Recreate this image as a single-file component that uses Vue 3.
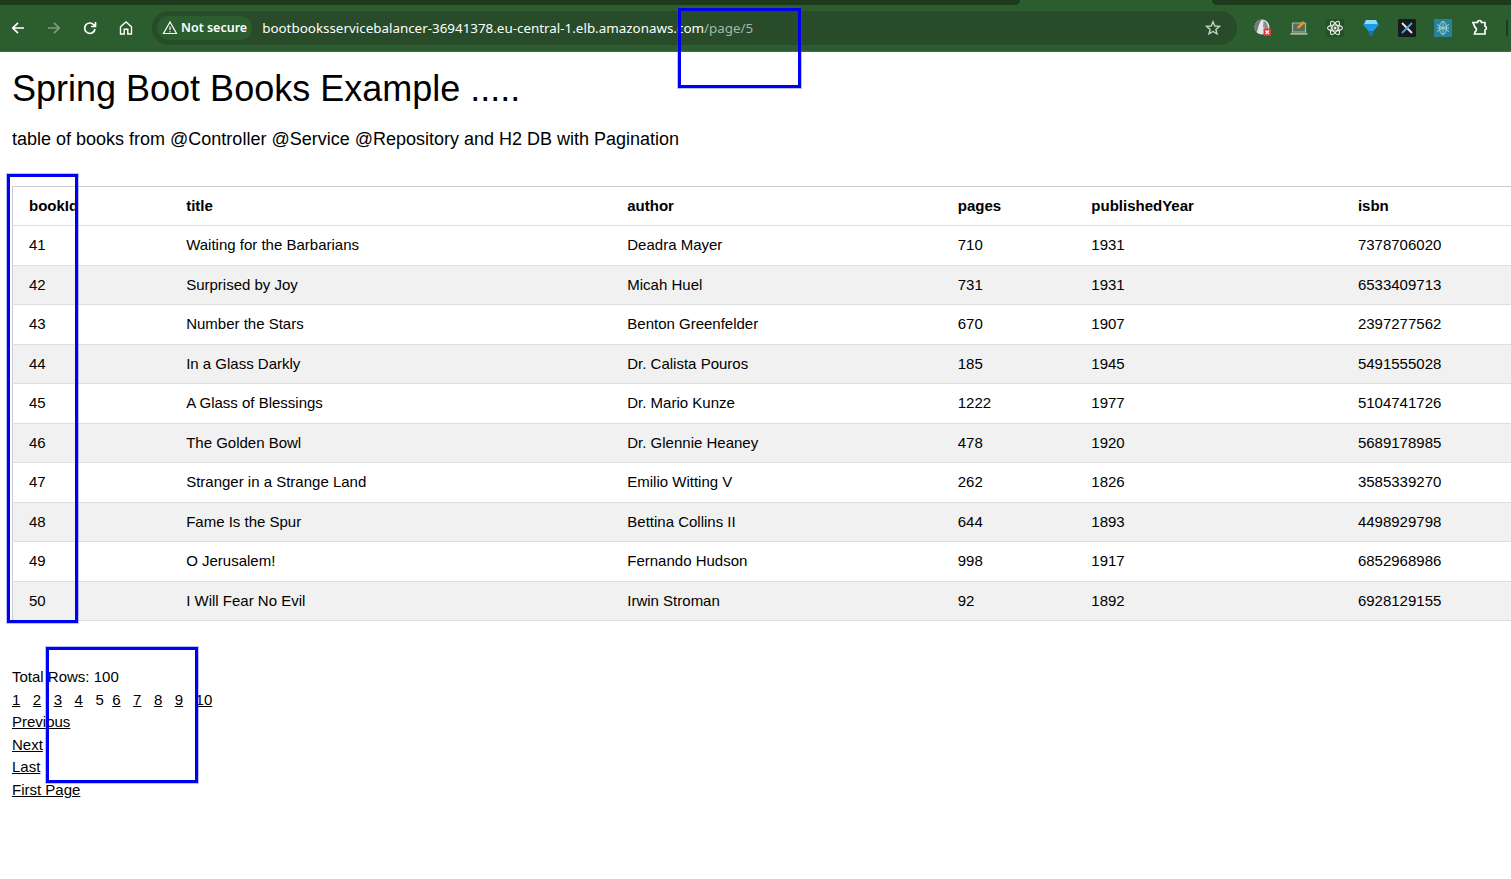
<template>
  <div class="page">
    <header class="browser">
      <div class="tabstrip">
        <div class="tab-dark first"></div>
        <div class="tab-gap"></div>
        <div class="tab-dark second"></div>
      </div>
      <div class="toolbar">
        <div class="nav">
          <button class="nav-btn">
            <svg viewBox="0 0 16 16" class="nav-icon"><path d="M14 8H3M8 2.800 2.800 8 8 13.200" /></svg>
          </button>
          <button class="nav-btn off">
            <svg viewBox="0 0 16 16" class="nav-icon"><path d="M2 8h11M8 2.800 13.200 8 8 13.200" /></svg>
          </button>
          <button class="nav-btn">
            <svg viewBox="0 0 16 16" class="nav-icon"><path d="M13 9a5.200 5.200 0 1 1-1.300-4.300L13.500 6.500M13.500 2v4.500H9" /></svg>
          </button>
          <button class="nav-btn">
            <svg viewBox="0 0 16 16" class="nav-icon thin"><path d="M2.500 14V6.800L8 2l5.500 4.800V14h-3.700V9.200H6.200V14z" /></svg>
          </button>
        </div>
        <div class="omnibox">
          <div class="chip">
            <svg viewBox="0 0 16 16" class="warn"><path d="M8 2 1.500 13.500h13zM8 6.500v3.600M8 11.200v1" /></svg>
            <span>Not secure</span>
          </div>
          <div class="url">bootbooksservicebalancer-36941378.eu-central-1.elb.amazonaws.com<span class="path">/page/5</span></div>
          <svg viewBox="0 0 16 16" class="star"><path d="M8 1.800 9.800 6l4.600.4-3.500 3 1.100 4.500L8 11.500l-4 2.400 1.100-4.500-3.500-3L6.200 6z" /></svg>
        </div>
        <div class="extensions">
          <svg viewBox="0 0 18 18" class="ext">
            <circle cx="8" cy="8" r="7.500" fill="#e6e6e6" />
            <path d="M8 .5a7.500 7.500 0 0 0-5 13c1-4 1.500-9 5-13z" fill="#77797a" />
            <path d="M9.500 1.500 9 8c2 1 3 3 3 5l2-2.500C14.500 7 13 3 9.500 1.500z" fill="#8d8f90" />
            <rect x="9.500" y="9.500" width="7.500" height="7.500" fill="#d93a3a" />
            <path d="m11.500 11.500 3.500 3.500m0-3.500L11.500 15" stroke="#fff" stroke-width="1.300" />
          </svg>
          <svg viewBox="0 0 18 18" class="ext">
            <path d="M2.500 4h13v9h-13z" fill="#55705a" stroke="#aeb6aa" stroke-width="1.200" />
            <path d="M.5 14.800h17" stroke="#aeb6aa" stroke-width="1.800" />
            <path d="m7 9.500.5-2.300L12.800 2l1.900 1.900L9.400 9.200z" fill="#f0921e" />
          </svg>
          <svg viewBox="0 0 18 18" class="ext">
            <rect width="18" height="18" fill="#25512a" />
            <g fill="none" stroke="#e4ece2" stroke-width="1.100">
              <ellipse cx="9" cy="9" rx="7.500" ry="3" />
              <ellipse cx="9" cy="9" rx="7.500" ry="3" transform="rotate(60 9 9)" />
              <ellipse cx="9" cy="9" rx="7.500" ry="3" transform="rotate(120 9 9)" />
            </g>
            <circle cx="9" cy="9" r="1.500" fill="#e4ece2" />
          </svg>
          <svg viewBox="0 0 18 18" class="ext">
            <path d="M4 1h10l3 4.500-5.500 6.500L10 17H8l-1.500-5L1 5.500z" fill="#1e9be6" />
            <path d="M4 1h10l1.500 4h-13z" fill="#8fdcf8" />
            <path d="M7 12h4l-1 5H8z" fill="#0d6ea8" />
          </svg>
          <svg viewBox="0 0 18 18" class="ext">
            <rect width="18" height="18" rx="1.500" fill="#17191c" />
            <path d="m4 4 10 10" stroke="#e8eef2" stroke-width="1.800" />
            <path d="M14 4 4 14" stroke="#4aa3e8" stroke-width="1.800" />
          </svg>
          <svg viewBox="0 0 18 18" class="ext">
            <rect width="18" height="18" fill="#2a8298" />
            <g fill="none" stroke="#9fcdd6" stroke-width="1">
              <ellipse cx="9" cy="9" rx="3.500" ry="6.500" />
              <path d="M3 5.500 15 12.500M15 5.500 3 12.500M9 2v14M3 9h12" />
            </g>
          </svg>
          <svg viewBox="0 0 18 18" class="ext puzzle"><path d="M2 3.500h4.500a2 2 0 0 1 4 0H14v3.700a2 2 0 0 1 0 3.800V15H3.500l.7-2.500a2.200 2.200 0 0 0 0-4L2 3.500z" /></svg>
        </div>
        <div class="divider"></div>
      </div>
    </header>

    <main class="content">
      <h1 class="title">Spring Boot Books Example .....</h1>
      <p class="lead">table of books from @Controller @Service @Repository and H2 DB with Pagination</p>

      <table class="books">
        <colgroup>
          <col v-for="w in colWidths" :key="w" :style="{ width: w + 'px' }" />
        </colgroup>
        <thead>
          <tr>
            <th v-for="c in columns" :key="c">{{ c }}</th>
          </tr>
        </thead>
        <tbody>
          <tr v-for="b in books" :key="b.bookId">
            <td v-for="c in columns" :key="c">{{ b[c] }}</td>
          </tr>
        </tbody>
      </table>

      <div class="pager">
        <div>Total Rows: 100</div>
        <div class="pages">
          <template v-for="n in 10" :key="n">
            <span v-if="n === 5" class="current">{{ n }}</span>
            <a v-else href="#" class="num">{{ n }}</a>
          </template>
        </div>
        <div><a href="#">Previous</a></div>
        <div><a href="#">Next</a></div>
        <div><a href="#">Last</a></div>
        <div><a href="#">First Page</a></div>
      </div>
    </main>

    <!-- annotation boxes drawn over the screenshot -->
    <div class="mark mark-url"></div>
    <div class="mark mark-ids"></div>
    <div class="mark mark-pages"></div>
  </div>
</template>

<script setup>
const columns = ['bookId', 'title', 'author', 'pages', 'publishedYear', 'isbn']
const colWidths = [157.6, 441, 330.4, 133.5, 266.5, 169]

const rows = [
  [41, 'Waiting for the Barbarians', 'Deadra Mayer', 710, 1931, 7378706020],
  [42, 'Surprised by Joy', 'Micah Huel', 731, 1931, 6533409713],
  [43, 'Number the Stars', 'Benton Greenfelder', 670, 1907, 2397277562],
  [44, 'In a Glass Darkly', 'Dr. Calista Pouros', 185, 1945, 5491555028],
  [45, 'A Glass of Blessings', 'Dr. Mario Kunze', 1222, 1977, 5104741726],
  [46, 'The Golden Bowl', 'Dr. Glennie Heaney', 478, 1920, 5689178985],
  [47, 'Stranger in a Strange Land', 'Emilio Witting V', 262, 1826, 3585339270],
  [48, 'Fame Is the Spur', 'Bettina Collins II', 644, 1893, 4498929798],
  [49, 'O Jerusalem!', 'Fernando Hudson', 998, 1917, 6852968986],
  [50, 'I Will Fear No Evil', 'Irwin Stroman', 92, 1892, 6928129155]
]
const books = rows.map(r => Object.fromEntries(columns.map((c, i) => [c, r[i]])))
</script>

<style>
html, body { overflow: hidden; background: #fff; }
</style>

<style scoped>
.page {
  position: relative;
  height: 879px;
  overflow: hidden;
  font-family: "Liberation Sans", Arial, sans-serif;
  font-size: 15px;
  line-height: 1.5;
  color: #000;
}

.browser { background: #2b5d2e; height: 52px; border-bottom: 1px solid #3d6e40; box-sizing: border-box; }
.tabstrip { display: flex; height: 5px; background: #2b5d2e; }
.tab-dark { background: #1d3a1c; height: 5px; }
.tab-dark.first { width: 1020px; border-bottom-right-radius: 6px; }
.tab-gap { width: 192px; }
.tab-dark.second { flex: 1; border-bottom-left-radius: 6px; }

.toolbar { display: flex; align-items: center; height: 46px; }
.nav { display: flex; padding-left: 0; width: 152px; }
.nav-btn {
  width: 36px; height: 36px; padding: 0; border: none; background: none;
  display: flex; align-items: center; justify-content: center;
}
.nav-icon { width: 16px; height: 16px; fill: none; stroke: #fff; stroke-width: 1.700; }
.nav-icon.thin { stroke-width: 1.400; }
.nav-btn.off .nav-icon { stroke: #7f9e80; }

.omnibox {
  width: 1085px; height: 34px; box-sizing: border-box;
  display: flex; align-items: center;
  padding: 0 16px 0 5px;
  background: #284b29;
  border-radius: 17px;
}
.chip {
  display: flex; align-items: center; gap: 3px;
  height: 24px; padding: 0 5px;
  background: #2b5d2e;
  border-radius: 12px;
  color: #fff;
  font-family: "Noto Sans", sans-serif;
  font-size: 12.500px;
  font-weight: 600;
  white-space: nowrap;
}
.warn { width: 16px; height: 16px; fill: none; stroke: #fff; stroke-width: 1.200; }
.url {
  flex: 1;
  margin-left: 10px;
  color: #fff;
  font-family: "Noto Sans", sans-serif;
  font-size: 13.400px;
  white-space: nowrap;
}
.path { color: #a5b8a5; }
.star { width: 16px; height: 16px; fill: none; stroke: #c6d2c6; stroke-width: 1.400; }

.extensions { display: flex; align-items: center; gap: 18px; margin-left: 17px; }
.ext { width: 18px; height: 18px; display: block; }
.puzzle { fill: none; stroke: #fff; stroke-width: 1.700; margin-left: 1px; }
.divider { width: 2px; height: 16px; margin-left: 17px; background: #1d3a1c; }

.content { padding: 0 0 0 12px; }
.title {
  margin: 0;
  padding-top: 15px;
  font-size: 36px;
  font-weight: 400;
  line-height: 44px;
}
.lead { margin: 15px 0 0; font-size: 18px; line-height: 27px; }

.books {
  margin-top: 32.500px;
  width: 1499px;
  table-layout: fixed;
  border-collapse: collapse;
  border: 1px solid #ccc;
  border-right: none;
}
.books th, .books td {
  padding: 8px 0 8px 16px;
  text-align: left;
  border-bottom: 1px solid #ddd;
  white-space: nowrap;
}
.books th { font-weight: 700; }
.books tbody tr:nth-child(even) { background: #f1f1f1; }
.books tbody tr:last-child td { border-bottom: 1px solid #ddd; }

.pager { margin-top: 45px; }
.pager a { color: #000; }
.pages { display: flex; }
.num { margin-right: 12.500px; }
.current { margin-right: 8.500px; }

.mark {
  position: absolute;
  border: 3px solid #0000f0;
  box-sizing: border-box;
  box-shadow: 0 0 0 1px rgba(70, 70, 255, 0.35);
}
.mark-url { left: 678px; top: 8px; width: 123px; height: 80px; }
.mark-ids { left: 7px; top: 174px; width: 71px; height: 449px; }
.mark-pages { left: 46px; top: 647px; width: 152px; height: 136px; }
</style>
